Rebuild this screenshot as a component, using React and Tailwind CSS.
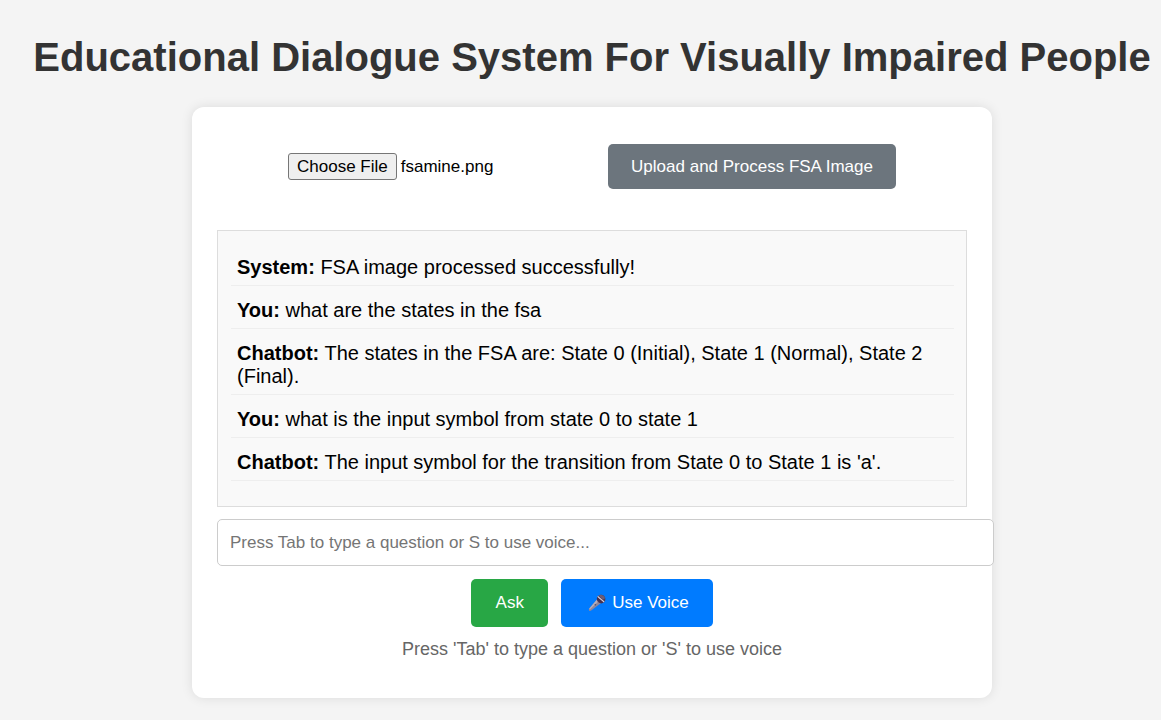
import { useEffect, useRef } from "react";

const messages = [
  { from: "System", text: "FSA image processed successfully!" },
  { from: "You", text: "what are the states in the fsa" },
  {
    from: "Chatbot",
    text: "The states in the FSA are: State 0 (Initial), State 1 (Normal), State 2 (Final).",
  },
  { from: "You", text: "what is the input symbol from state 0 to state 1" },
  {
    from: "Chatbot",
    text: "The input symbol for the transition from State 0 to State 1 is 'a'.",
  },
];

function Microphone() {
  return (
    <svg className="h-[18px] w-[18px]" viewBox="0 0 18 18" aria-hidden="true">
      <path d="M9.4 5 13 8.9 3.2 16.6Q1.6 17.4 1 16.6 .6 15.8 1.3 14.6Z" fill="#8f879c" />
      <path d="M9.4 5 11 6.8 1.9 15.6 1.3 14.6Z" fill="#b5aebc" />
      <circle cx="13.1" cy="5" r="4.3" fill="#4a3a57" />
      <path d="M10.6 1.6A4.3 4.3 0 0 1 17.2 4.2L15 5.4Z" fill="#6b5d78" />
      <path d="M10.1 1.9 16.5 7.6 15.6 8.6 9.2 3Z" fill="#d6cfd8" />
      <path d="M9.2 3 15.6 8.6Q14.4 9.6 13 9.3L8.9 5.2Z" fill="#47304f" />
      <path d="M6.8 10.2 8 11.2" stroke="#5c5369" strokeWidth="1.2" />
    </svg>
  );
}

function FilePicker() {
  const ref = useRef(null);
  useEffect(() => {
    const transfer = new DataTransfer();
    transfer.items.add(new File([""], "fsamine.png", { type: "image/png" }));
    ref.current.files = transfer.files;
  }, []);
  return (
    <input
      ref={ref}
      type="file"
      accept="image/*"
      aria-label="FSA image"
      className="w-60 text-[17px] leading-[19px] text-black file:mr-1 file:rounded-[3px] file:border file:border-solid file:border-[#767676] file:bg-[#efefef] file:px-2 file:py-[3px] file:text-black"
    />
  );
}

export default function App() {
  return (
    <div className="min-h-screen bg-[#f4f4f4] pb-[22px] pl-[23px] pt-[34px] font-['Liberation_Sans',Arial,sans-serif] text-black">
      <h1 className="whitespace-nowrap text-center text-[40px] font-bold leading-[46px] text-[#333]">
        Educational Dialogue System For Visually Impaired People
      </h1>
      <main className="mx-auto mt-[27px] max-w-[800px] rounded-[12px] bg-white px-[25px] pb-[38px] pt-[37px] shadow-[0_0_12px_rgba(0,0,0,0.1)]">
        <div className="flex items-center justify-between px-[71px]">
          <FilePicker />
          <button
            type="button"
            className="rounded-[5px] bg-[#6c757d] px-[23px] py-3 text-[17px] leading-[21px] text-white"
          >
            Upload and Process FSA Image
          </button>
        </div>

        <section
          aria-label="Conversation"
          className="mt-[41px] flex flex-col gap-[7px] border border-[#ddd] bg-[#f9f9f9] pb-[25px] pl-[13px] pr-3 pt-[19px]"
        >
          {messages.map((m, i) => (
            <p key={i} className="border-b border-[#eee] p-[6px] text-[20px] leading-[23px]">
              <strong className="font-bold">{m.from}:</strong> {m.text}
            </p>
          ))}
        </section>

        <input
          type="text"
          aria-label="Question"
          placeholder="Press Tab to type a question or S to use voice..."
          className="mt-3 block w-[calc(100%+27px)] rounded-[5px] border border-[#ccc] bg-white px-3 py-3 text-[17px] leading-[21px] placeholder:text-[#757575]"
        />

        <div className="mt-[13px] flex justify-center gap-[13px]">
          <button
            type="button"
            className="min-w-[77px] rounded-[5px] bg-[#28a745] px-6 py-3 text-[17px] leading-6 text-white"
          >
            Ask
          </button>
          <button
            type="button"
            className="flex items-center gap-[6px] rounded-[5px] bg-[#007bff] py-3 pl-[27px] pr-6 text-[17px] leading-6 text-white"
          >
            <Microphone />
            Use Voice
          </button>
        </div>
        <p className="mt-3 text-center text-[18px] leading-[21px] text-[#666]">
          Press 'Tab' to type a question or 'S' to use voice
        </p>
      </main>
    </div>
  );
}
